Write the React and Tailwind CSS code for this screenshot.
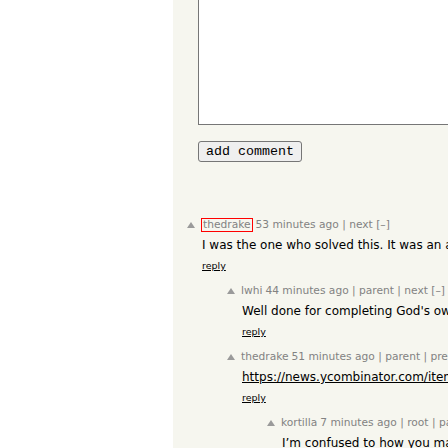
import React from 'react';

const comments = [
  {
    user: 'thedrake',
    boxed: true,
    meta: '53 minutes ago | next [–]',
    text: 'I was the one who solved this. It was an absolute nightmare to track down, but worth it.',
    level: 0,
  },
  {
    user: 'lwhi',
    meta: '44 minutes ago | parent | next [–]',
    text: "Well done for completing God's own work, seriously.",
    level: 1,
  },
  {
    user: 'thedrake',
    meta: '51 minutes ago | parent | prev | next [–]',
    text: 'https://news.ycombinator.com/item?id=13416309',
    link: true,
    level: 1,
  },
  {
    user: 'kortilla',
    meta: '7 minutes ago | root | parent | prev | next [–]',
    text: 'I’m confused to how you managed to do this one.',
    level: 2,
  },
];

function VoteArrow() {
  return (
    <svg width="8" height="6" viewBox="0 0 8 6" className="block">
      <polygon points="4,0 8,6 0,6" fill="#9a9a9a" />
    </svg>
  );
}

function Comment({ c }) {
  return (
    <div className="flex mb-[13px]">
      <div className="shrink-0" style={{ width: c.level * 40 }} />
      <div className="w-[15px] h-[14px] shrink-0 flex items-center pl-[0.5px]">
        <VoteArrow />
      </div>
      <div className="flex flex-col">
        <div className="h-[14px] flex items-center gap-[3px] text-[10.67px] text-[#828282] whitespace-nowrap">
          <span className={c.boxed ? 'border border-[#ff0000] leading-[12px] px-[1px]' : ''}>{c.user}</span>
          <span>{c.meta}</span>
        </div>
        <div className={`mt-[6px] pl-[1px] text-[12px] leading-[14px] text-black whitespace-nowrap ${c.link ? 'underline' : ''}`}>
          {c.text}
        </div>
        <div className="mt-[8px] pl-[1px] text-[9.5px] leading-[11px] text-black underline">reply</div>
      </div>
    </div>
  );
}

export default function App() {
  return (
    <div className="w-[448px] h-[448px] overflow-hidden flex bg-white font-['DejaVu_Sans',Verdana,sans-serif]">
      <div className="w-[173px] shrink-0 bg-white" />
      <div className="flex-1 min-w-0 bg-[#f6f6ef] overflow-hidden">
        <div className="pl-[25px]">
          <div className="-mt-[20px] h-[145px] w-[600px] border border-[#767676] bg-white" />
          <button className="mt-[16px] h-[21px] px-[7px] border border-[#767676] rounded-[3px] bg-[#efefef] text-[13.33px] leading-[15px] font-['Liberation_Mono',monospace] text-black">
            add comment
          </button>
        </div>
        <div className="mt-[56px] pl-[13px]">
          {comments.map((c, i) => (
            <Comment key={i} c={c} />
          ))}
        </div>
      </div>
    </div>
  );
}
